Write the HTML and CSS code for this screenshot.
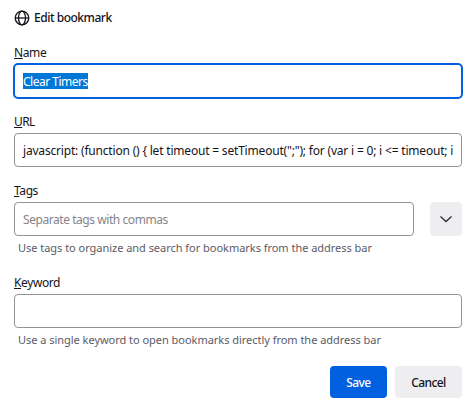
FILE: index.html
```html
<!DOCTYPE html>
<html lang="en">
<head>
<meta charset="utf-8">
<title>Edit bookmark</title>
<link rel="stylesheet" href="styles.css">
</head>
<body>
<main class="dialog">
  <header class="title">
    <svg class="globe" viewBox="0 0 16 16" aria-hidden="true"><circle cx="8" cy="8" r="6.8"/><ellipse cx="8" cy="8" rx="3.5" ry="6.8"/><path d="M1.2 8h13.6"/></svg>
    <h1>Edit bookmark</h1>
  </header>
  <div class="label"><u>N</u>ame</div>
  <div class="field focused"><span class="selected">Clear Timers</span></div>
  <div class="label url-label"><u>U</u>RL</div>
  <div class="field url"><span>javascript: (function () { let timeout = setTimeout(";"); for (var i = 0; i &lt;= timeout; i</span></div>
  <div class="label"><u>T</u>ags</div>
  <div class="tagrow">
    <div class="field placeholder">Separate tags with commas</div>
    <div class="expand"><svg viewBox="0 0 16 16" aria-hidden="true"><path d="M2.5 5.5 8 10.5l5.5-5"/></svg></div>
  </div>
  <p class="hint">Use tags to organize and search for bookmarks from the address bar</p>
  <div class="label"><u>K</u>eyword</div>
  <div class="field keyword"></div>
  <p class="hint keyword-hint">Use a single keyword to open bookmarks directly from the address bar</p>
  <footer class="actions"><div class="button primary">Save</div><div class="button">Cancel</div></footer>
</main>
</body>
</html>
```
FILE: styles.css
```css
* { box-sizing: border-box; }
body { margin: 0; background: #fff; color: #15141a; font: 12px/16px "Noto Sans", "Open Sans", sans-serif; }
.dialog { width: 473px; height: 407px; padding: 10px 11px 0 14px; overflow: hidden; }
.title { display: flex; align-items: center; gap: 4px; height: 16px; margin-bottom: 19px; }
.title h1 { margin: 0; font-size: 12px; font-weight: 500; letter-spacing: -.48px; }
.globe { width: 16px; height: 16px; fill: none; stroke: #15141a; stroke-width: 1.3; }
.label { height: 16px; margin-bottom: 3px; letter-spacing: -.4px; }
.url-label { letter-spacing: -.6px; }
.field { display: flex; align-items: center; width: 448px; height: 34px; padding: 2px 8px 0; border: 1px solid #929297; border-radius: 4px; white-space: nowrap; margin-bottom: 16px; }
.focused { width: 450px; height: 36px; margin: -1px -1px 15px; padding-top: 0; border: 2px solid #0060df; border-radius: 5px; }
.selected { height: 16px; line-height: 18px; background: #0078d7; color: #fff; letter-spacing: -.5px; }
.url { letter-spacing: -.19px; }
.tagrow { display: flex; gap: 16px; }
.tagrow .field { width: 400px; margin: 0; color: #85848a; letter-spacing: -.44px; }
.expand { width: 32px; height: 34px; display: grid; place-items: center; border-radius: 4px; background: #eeeef0; }
.expand svg { width: 16px; height: 16px; fill: none; stroke: #2b2a33; stroke-width: 1.3; }
.hint { margin: 4px 0 19px 4px; font-size: 11px; letter-spacing: -.03px; color: #5b5b66; }
.keyword { margin-bottom: 4px; }
.keyword-hint { margin: 0 0 18px 4px; }
.actions { display: flex; justify-content: flex-end; gap: 8px; }
.button { display: grid; place-items: center; width: 67px; height: 32px; padding-top: 2px; border-radius: 4px; background: #eeeef0; font-weight: 500; letter-spacing: -.6px; }
.primary { width: 57px; background: #0060df; color: #fff; }
```
